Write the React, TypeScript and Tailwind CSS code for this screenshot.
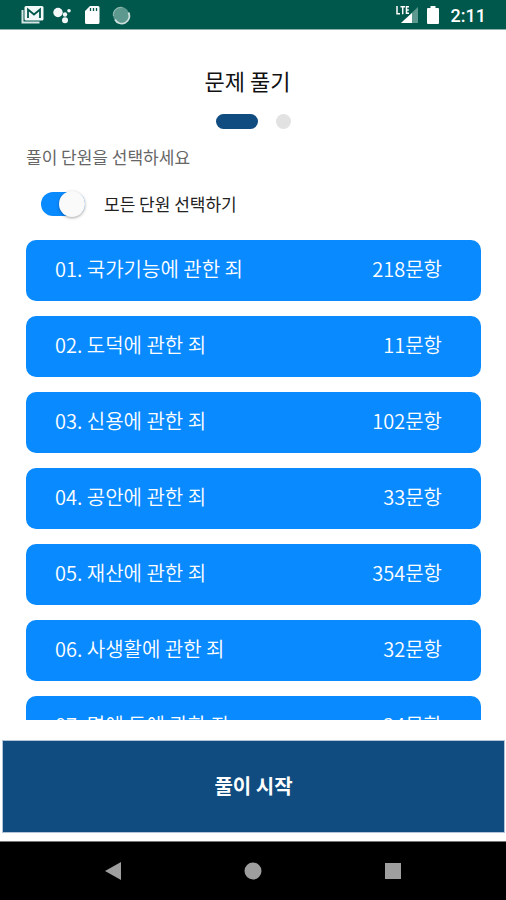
import { useState } from "react";

const units = [
  { title: "01. 국가기능에 관한 죄", count: 218 },
  { title: "02. 도덕에 관한 죄", count: 11 },
  { title: "03. 신용에 관한 죄", count: 102 },
  { title: "04. 공안에 관한 죄", count: 33 },
  { title: "05. 재산에 관한 죄", count: 354 },
  { title: "06. 사생활에 관한 죄", count: 32 },
  { title: "07. 명예 등에 관한 죄", count: 24 },
];

function StatusBar() {
  return (
    <header className="flex h-[30px] shrink-0 items-center justify-between border-b border-[#8fb0a9] bg-[#00574b] pr-5 pl-5 text-white">
      <div className="flex items-center">
        <svg width="24" height="20" viewBox="0 0 24 20" aria-label="Gmail" role="img">
          <path d="M2.500 5v12.500h17" fill="none" stroke="#d5e5e2" strokeWidth="2" />
          <rect x="4.500" y="1" width="19" height="14.500" rx="1.500" fill="#f2f8f7" />
          <path d="M8 13V4.500l6 5 6-5V13" fill="none" stroke="#00574b" strokeWidth="1.800" />
        </svg>
        <svg className="ml-2" width="20" height="20" viewBox="0 0 20 20" aria-label="Assistant" role="img">
          <g fill="#f2f8f7">
            <circle cx="6" cy="7.500" r="4.700" />
            <circle cx="13" cy="9.500" r="2.200" />
            <circle cx="17" cy="5.800" r="1.800" />
            <circle cx="13" cy="15.300" r="3" />
          </g>
        </svg>
        <svg className="ml-3" width="16" height="20" viewBox="0 0 16 20" aria-label="SD card" role="img">
          <path d="M6 1h8a1.500 1.500 0 0 1 1.500 1.500v15A1.500 1.500 0 0 1 14 19H2.500A1.500 1.500 0 0 1 1 17.500V6z" fill="#fff" />
          <path d="M6.500 3v3M9.500 3v3M12.500 3v3" stroke="#00574b" strokeWidth="1.300" />
        </svg>
        <svg className="ml-3" width="20" height="20" viewBox="0 0 20 20" aria-label="Sync" role="img">
          <circle cx="9" cy="10" r="8" fill="#5e998f" />
          <path d="M3 14.500a7.500 7.500 0 0 0 13.500-7" fill="none" stroke="#cfe1de" strokeWidth="1.800" />
          <path d="M1.500 11a7.500 7.500 0 0 1 9-8.500" fill="none" stroke="#8ab5ae" strokeWidth="1.200" />
        </svg>
      </div>
      <div className="flex items-center">
        <svg width="24" height="20" viewBox="0 0 24 20" aria-label="LTE" role="img">
          <path d="M23 2v16H6z" fill="#5e998f" />
          <path d="M17 8v10H6z" fill="#fff" />
          <path d="M2 1v7.800h3M5.500 1.800h4.500M7.700 1.800v7.500M14 1.800h-2.500v6.400H14M11.500 5h2.300" fill="none" stroke="#fff" strokeWidth="1.500" />
        </svg>
        <svg className="ml-2" width="12" height="20" viewBox="0 0 12 20" aria-label="Battery" role="img">
          <path d="M3.500 1h5v2H11a1 1 0 0 1 1 1v14a1 1 0 0 1-1 1H1a1 1 0 0 1-1-1V4a1 1 0 0 1 1-1h2.500z" fill="#fff" />
        </svg>
        <time className="ml-3 pt-0.5 font-['Roboto',sans-serif] text-[18px] leading-5 font-medium">2:11</time>
      </div>
    </header>
  );
}

function NavigationBar() {
  return (
    <nav className="flex h-[59px] shrink-0 items-center justify-center gap-[116px] border-t border-[#777] bg-black">
      <button type="button" aria-label="뒤로" className="size-6">
        <svg viewBox="0 0 24 24"><path d="M20 3v18L4 12z" fill="#9e9e9e" /></svg>
      </button>
      <button type="button" aria-label="홈" className="size-6">
        <svg viewBox="0 0 24 24"><circle cx="12" cy="12" r="8.500" fill="#9e9e9e" /></svg>
      </button>
      <button type="button" aria-label="최근 앱" className="size-6">
        <svg viewBox="0 0 24 24"><path d="M4 4h16v16H4z" fill="#9e9e9e" /></svg>
      </button>
    </nav>
  );
}

export default function App() {
  const [selected, setSelected] = useState<boolean[]>(units.map(() => true));
  const all = selected.every(Boolean);

  return (
    <div className="flex h-screen flex-col bg-white font-['Noto_Sans_CJK_KR',sans-serif]">
      <StatusBar />

      <main className="flex min-h-0 flex-1 flex-col pt-[34px] pr-[25px] pl-[26px]">
        <h1 className="pr-3 text-center text-[22px] leading-8 text-[#111]">문제 풀기</h1>
        <div className="mt-[18px] flex items-center justify-center gap-[18px]">
          <span className="h-[15px] w-[42px] rounded-full bg-[#104c80]" />
          <span className="size-[15px] rounded-full bg-[#e2e2e2]" />
        </div>
        <p className="mt-4 text-[17px] leading-6 text-[#666]">풀이 단원을 선택하세요</p>

        <label className="mt-[21px] ml-[15px] flex items-center self-start text-[17px] leading-7 text-[#222]">
          <input
            type="checkbox"
            role="switch"
            className="peer sr-only"
            checked={all}
            onChange={(e) => setSelected(units.map(() => e.target.checked))}
          />
          <span className="flex h-6 w-11 items-center rounded-full bg-[#bbb] peer-checked:justify-end peer-checked:bg-[#0a8aff]">
            <span className="size-[26px] shrink-0 rounded-full bg-[#fafafa] shadow-[0_1px_3px_rgba(0,0,0,0.35)]" />
          </span>
          <span className="ml-[19px]">모든 단원 선택하기</span>
        </label>

        <ul className="mt-[22px] flex min-h-0 flex-1 flex-col gap-[15px] overflow-y-auto [scrollbar-width:none]">
          {units.map((unit, i) => (
            <li key={unit.title} className="shrink-0">
              <button
                type="button"
                aria-pressed={selected[i]}
                onClick={() => setSelected(selected.map((s, j) => (j === i ? !s : s)))}
                className="flex h-[61px] w-full items-center justify-between rounded-[10px] bg-[#8a9bab] pr-[39px] pb-1 pl-[29px] text-[20px] leading-7 font-[350] text-white aria-pressed:bg-[#0a8aff]"
              >
                <span>{unit.title}</span>
                <span>{unit.count}문항</span>
              </button>
            </li>
          ))}
        </ul>
      </main>

      <div className="shrink-0 pt-5 pr-px pb-2 pl-0.5">
        <button type="button" className="h-[93px] w-full border border-[#b4c4d8] bg-[#104c80] pb-0.5 text-[20px] leading-7 font-bold text-white">
          풀이 시작
        </button>
      </div>
      <NavigationBar />
    </div>
  );
}
